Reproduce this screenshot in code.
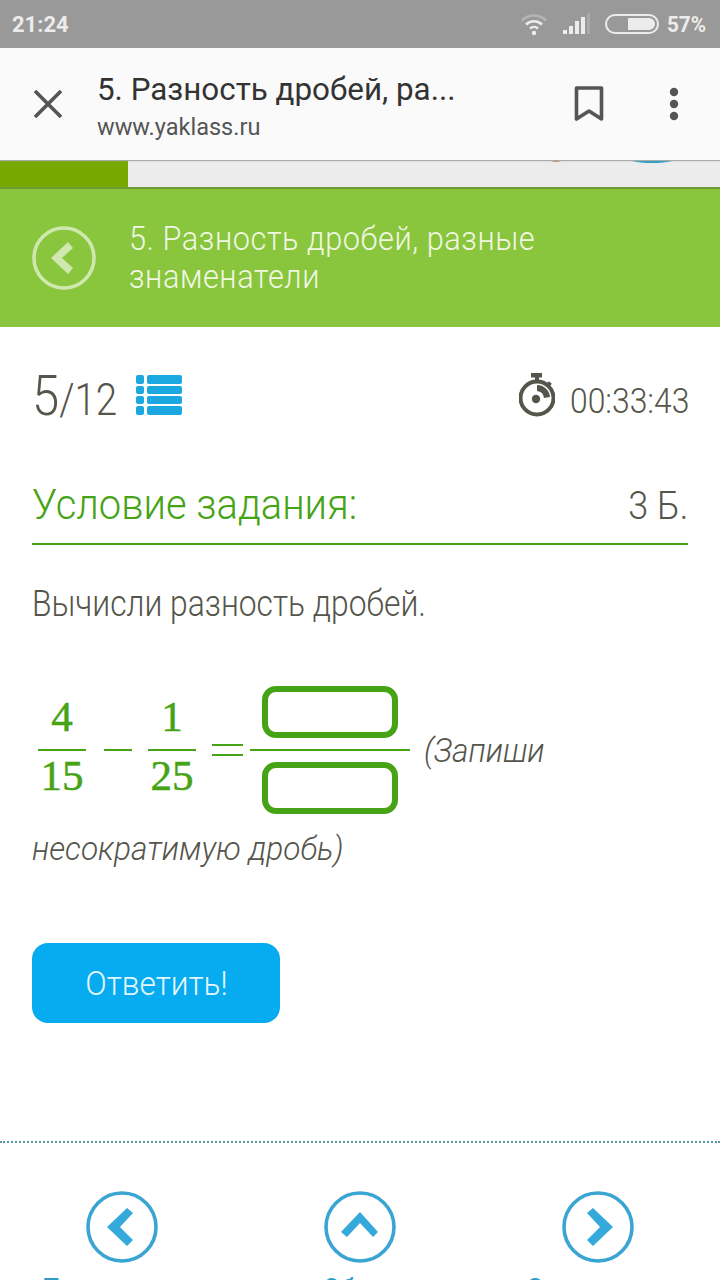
<script>
  const fractions = [
    { top: "4", bottom: "15" },
    { top: "1", bottom: "25" },
  ];
</script>

<div class="page">
  <div class="status">
    <span class="clock">21:24</span>
    <div class="status-right">
      <svg class="wifi" width="28" height="24" viewBox="0 0 28 24">
        <path d="M2 8.5 a17 17 0 0 1 24 0" fill="none" stroke="#b5b5b5" stroke-width="2.6" />
        <path d="M6 12.5 a11.5 11.5 0 0 1 16 0" fill="none" stroke="#ececec" stroke-width="2.6" />
        <path d="M10 16.5 a6 6 0 0 1 8 0" fill="none" stroke="#ececec" stroke-width="2.6" />
        <circle cx="14" cy="21" r="2.2" fill="#ececec" />
      </svg>
      <svg class="signal" width="30" height="22" viewBox="0 0 30 22">
        <rect x="1" y="17" width="4" height="4" fill="#ececec" />
        <rect x="7" y="13" width="4" height="8" fill="#ececec" />
        <rect x="13" y="8" width="4" height="13" fill="#ececec" />
        <rect x="19" y="4" width="4" height="17" fill="#ececec" />
        <rect x="25" y="0" width="3" height="21" fill="#aaa" />
      </svg>
      <div class="battery"><div class="battery-fill"></div></div>
      <span class="percent">57%</span>
    </div>
  </div>

  <div class="toolbar">
    <svg class="close" width="30" height="30" viewBox="0 0 30 30">
      <path d="M2 2 L28 28 M28 2 L2 28" stroke="#555" stroke-width="3.6" fill="none" />
    </svg>
    <div class="titles">
      <div class="title">5. Разность дробей, ра...</div>
      <div class="url">www.yaklass.ru</div>
    </div>
    <svg class="bookmark" width="30" height="36" viewBox="0 0 30 36">
      <path d="M2.5 2 H27.5 V33 L15 25 L2.5 33 Z" fill="none" stroke="#555" stroke-width="3.6" stroke-linejoin="round" />
    </svg>
    <svg class="dots" width="12" height="34" viewBox="0 0 12 34">
      <circle cx="6" cy="5" r="4.2" fill="#555" />
      <circle cx="6" cy="17" r="4.2" fill="#555" />
      <circle cx="6" cy="29" r="4.2" fill="#555" />
    </svg>
  </div>

  <div class="strip">
    <div class="strip-green"></div>
    <div class="peek-orange"></div>
    <div class="peek-blue"></div>
  </div>

  <div class="banner">
    <svg class="back" width="64" height="64" viewBox="0 0 64 64">
      <circle cx="32" cy="32" r="30" fill="none" stroke="#cfe8ae" stroke-width="3.6" />
      <path d="M19 32 L36 16 L41 22 L30 32 L41 42 L36 48 Z" fill="#cfe8ae" />
    </svg>
    <div class="banner-title">
      <span>5. Разность дробей, разные</span>
      <span>знаменатели</span>
    </div>
  </div>

  <main class="content">
    <div class="stats">
      <div class="progress">
        <span class="count"><span class="big">5</span><span class="rest">/12</span></span>
        <svg class="list" width="46" height="42" viewBox="0 0 46 42">
          <g fill="#1ba8e0">
            <rect x="0" y="1" width="8" height="9" rx="2" />
            <rect x="11" y="1" width="35" height="9" rx="2" />
            <rect x="0" y="12" width="8" height="8" rx="2" />
            <rect x="11" y="12" width="35" height="8" rx="2" />
            <rect x="0" y="22" width="8" height="8" rx="2" />
            <rect x="11" y="22" width="35" height="8" rx="2" />
            <rect x="0" y="32" width="8" height="9" rx="2" />
            <rect x="11" y="32" width="35" height="9" rx="2" />
          </g>
        </svg>
      </div>
      <div class="timer">
        <svg width="36" height="44" viewBox="0 0 36 44">
          <rect x="12" y="0" width="11" height="4.5" fill="#55554b" />
          <rect x="16" y="4" width="4" height="5" fill="#55554b" />
          <rect x="28" y="9" width="4" height="5" fill="#55554b" transform="rotate(40 30 11)" />
          <circle cx="18" cy="25" r="16.5" fill="none" stroke="#55554b" stroke-width="4" />
          <circle cx="17" cy="26" r="4.2" fill="#55554b" />
          <path d="M18 12 A13 13 0 0 1 31 24 L25 25 A8 8 0 0 0 18 18 Z" fill="#55554b" />
        </svg>
        <span class="time">00:33:43</span>
      </div>
    </div>

    <div class="condition">
      <h2>Условие задания:</h2>
      <span class="points">3 Б.</span>
    </div>

    <p class="task">Вычисли разность дробей.</p>

    <div class="exercise">
      <div class="exercise-row">
        <span class="math">
          <span class="frac">
            <span class="num">{fractions[0].top}</span>
            <span class="den">{fractions[0].bottom}</span>
          </span>
          <span class="minus"></span>
          <span class="frac">
            <span class="num">{fractions[1].top}</span>
            <span class="den">{fractions[1].bottom}</span>
          </span>
          <span class="equals"></span>
          <span class="frac answer">
            <span class="box-wrap top"><span class="box"></span></span>
            <span class="box-wrap"><span class="box"></span></span>
          </span>
        </span>
        <em class="note">(Запиши</em>
      </div>
      <em class="note second">несократимую дробь)</em>
    </div>

    <button class="submit"><span>Ответить!</span></button>
  </main>

  <div class="divider"></div>

  <nav class="pager">
    <div class="pager-item">
      <svg width="72" height="72" viewBox="0 0 72 72">
        <circle cx="36" cy="36" r="34" fill="none" stroke="#3aa5d2" stroke-width="3.6" />
        <path d="M21 36 L41 17 L47 22 L34 36 L47 49 L41 55 Z" fill="#35a9da" />
      </svg>
      <span class="pager-label">Предыдущее</span>
    </div>
    <div class="pager-item">
      <svg width="72" height="72" viewBox="0 0 72 72">
        <circle cx="36" cy="36" r="34" fill="none" stroke="#3aa5d2" stroke-width="3.6" />
        <path d="M36 21 L17 41 L23 46 L36 32 L49 46 L54 41 Z" fill="#35a9da" />
      </svg>
      <span class="pager-label">Обзор</span>
    </div>
    <div class="pager-item">
      <svg width="72" height="72" viewBox="0 0 72 72">
        <circle cx="36" cy="36" r="34" fill="none" stroke="#3aa5d2" stroke-width="3.6" />
        <path d="M51 36 L31 17 L25 22 L38 36 L25 49 L31 55 Z" fill="#35a9da" />
      </svg>
      <span class="pager-label">Следующее</span>
    </div>
  </nav>
</div>

<style>
  :global(body) {
    background: #fff;
    overflow: hidden;
  }

  .page {
    width: 720px;
    height: 1280px;
    overflow: hidden;
    font-family: Roboto, "Liberation Sans", sans-serif;
    color: #55554b;
  }

  .status {
    height: 48px;
    background: #999;
    display: flex;
    align-items: center;
    justify-content: space-between;
    padding: 0 13px 0 12px;
    color: #ececec;
    font-weight: 700;
    font-size: 22px;
  }

  .status-right {
    display: flex;
    align-items: center;
  }

  .wifi {
    margin-right: 14px;
  }

  .signal {
    margin-right: 13px;
  }

  .battery {
    width: 54px;
    height: 20px;
    border: 2px solid #ececec;
    border-radius: 11px;
    box-sizing: border-box;
    padding: 2px;
    display: flex;
    justify-content: flex-end;
    margin-right: 8px;
  }

  .battery-fill {
    width: 27px;
    background: #ececec;
    border-radius: 1px 7px 7px 1px;
  }

  .percent {
    width: 40px;
    white-space: nowrap;
    transform: scaleX(0.94);
    transform-origin: left;
  }

  .toolbar {
    height: 112px;
    background: #fafafa;
    display: flex;
    align-items: center;
    position: relative;
    z-index: 1;
    box-shadow: 0 1px 1px #aaa;
  }

  .close {
    margin-left: 33px;
  }

  .titles {
    margin-left: 34px;
    width: 477px;
    padding-top: 4px;
  }

  .title {
    font-size: 32px;
    line-height: 38px;
    color: #333;
    transform: scaleX(0.98);
    transform-origin: left;
  }

  .url {
    font-size: 24px;
    line-height: 32px;
    margin-top: 3px;
    color: #555;
    transform: scaleX(0.98);
    transform-origin: left;
  }

  .bookmark {
    margin-right: 64px;
  }

  .strip {
    height: 27px;
    background: #ececec;
    position: relative;
    overflow: hidden;
  }

  .strip-green {
    width: 128px;
    height: 100%;
    background: #76a800;
  }

  .peek-orange {
    position: absolute;
    left: 546px;
    top: -14px;
    width: 20px;
    height: 16px;
    border-radius: 50%;
    background: #d5764a;
  }

  .peek-blue {
    position: absolute;
    left: 622px;
    top: -12px;
    width: 60px;
    height: 15px;
    border-radius: 50%;
    background: #2a9fc9;
  }

  .banner {
    height: 138px;
    background: #8ac53e;
    border-top: 2px solid #6f9a36;
    display: flex;
    align-items: center;
    padding-left: 32px;
  }

  .back {
    flex: none;
  }

  .banner-title {
    margin-left: 33px;
    color: #f0f7e3;
    font-size: 33px;
    font-weight: 300;
    line-height: 38px;
    letter-spacing: 0.6px;
    white-space: nowrap;
    transform: scaleX(0.93);
    transform-origin: left;
  }

  .banner-title span {
    display: block;
  }

  .content {
    padding: 0 32px;
  }

  .stats {
    display: flex;
    justify-content: space-between;
    align-items: flex-end;
    height: 99px;
  }

  .progress {
    display: flex;
    align-items: flex-end;
    font-weight: 300;
  }

  .count {
    width: 104px;
    white-space: nowrap;
    transform: scaleX(0.875);
    transform-origin: left;
  }

  .big {
    font-size: 56px;
    line-height: 60px;
  }

  .rest {
    font-size: 44px;
  }

  .list {
    margin-bottom: 10px;
  }

  .timer {
    display: flex;
    align-items: flex-end;
    font-weight: 300;
    font-size: 35px;
    line-height: 44px;
    margin-bottom: 2px;
  }

  .timer svg {
    margin-bottom: 7px;
  }

  .time {
    width: 118px;
    margin-left: 15px;
    white-space: nowrap;
    transform: scaleX(0.91);
    transform-origin: left;
  }

  .condition {
    display: flex;
    justify-content: space-between;
    align-items: baseline;
    border-bottom: 2px solid #4ba319;
    margin-top: 55px;
    padding-bottom: 14px;
  }

  h2 {
    margin: 0;
    font-size: 42px;
    font-weight: 300;
    line-height: 48px;
    color: #45a315;
    white-space: nowrap;
    transform: scaleX(0.95);
    transform-origin: left;
  }

  .points {
    font-size: 38px;
    font-weight: 300;
    transform: scaleX(0.95);
    transform-origin: right;
  }

  .task {
    margin: 36px 0 0;
    font-size: 36px;
    font-weight: 300;
    line-height: 46px;
    white-space: nowrap;
    transform: scaleX(0.883);
    transform-origin: left;
  }

  .exercise {
    margin-top: 59px;
    font-size: 34px;
    font-weight: 300;
    line-height: 50px;
  }

  .exercise-row {
    display: flex;
    align-items: center;
  }

  .note {
    display: block;
    margin-left: 14px;
    white-space: nowrap;
    transform: scaleX(0.93);
    transform-origin: left;
  }

  .note.second {
    margin: 9px 0 0;
  }

  .math {
    display: flex;
    align-items: center;
    margin-left: 6px;
    color: #45a315;
    font-family: "Liberation Serif", serif;
    font-weight: 400;
    font-size: 43px;
    line-height: 1;
    -webkit-text-stroke: 0.5px #45a315;
  }

  .frac {
    display: flex;
    flex-direction: column;
    align-items: center;
    width: 48px;
  }

  .num {
    display: block;
    width: 100%;
    text-align: center;
    border-bottom: 2px solid #45a315;
    padding-bottom: 10px;
    line-height: 44px;
  }

  .den {
    line-height: 44px;
    padding: 3px 0 7px;
  }

  .minus {
    width: 28px;
    height: 2px;
    background: #45a315;
    margin: 0 16px 0 18px;
  }

  .equals {
    width: 31px;
    height: 8px;
    border-top: 2px solid #45a315;
    border-bottom: 2px solid #45a315;
    margin: 0 7px 0 16px;
  }

  .answer {
    width: 160px;
  }

  .box-wrap {
    display: flex;
    justify-content: center;
    width: 100%;
  }

  .box-wrap.top {
    border-bottom: 2px solid #45a315;
    padding-bottom: 11px;
    margin-bottom: 11px;
  }

  .box {
    width: 136px;
    height: 52px;
    box-sizing: border-box;
    border: 6px solid #45a315;
    border-radius: 14px;
    background: #fff;
  }

  .submit {
    display: block;
    margin-top: 70px;
    width: 248px;
    height: 80px;
    border: none;
    border-radius: 16px;
    background: #06acef;
    color: #e6f6fd;
    font-family: inherit;
    font-size: 34px;
    font-weight: 300;
  }

  .submit span {
    display: inline-block;
    transform: scaleX(0.93);
  }

  .divider {
    margin-top: 118px;
    border-top: 2px dotted #5a9aa8;
  }

  .pager {
    display: grid;
    grid-template-columns: repeat(3, 238px);
    justify-content: center;
    margin-top: 48px;
  }

  .pager-item {
    display: flex;
    flex-direction: column;
    align-items: center;
  }

  .pager-label {
    color: #2e9cc4;
    font-size: 26px;
    line-height: 36px;
    margin-top: 7px;
    white-space: nowrap;
  }
</style>
